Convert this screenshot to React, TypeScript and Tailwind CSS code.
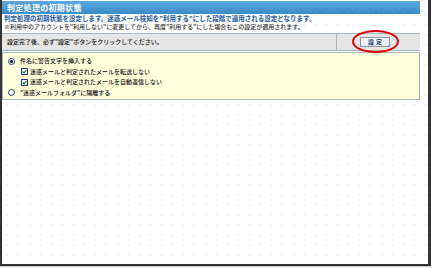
import React from "react";

function Radio({ checked }: { checked?: boolean }) {
  return (
    <span className="w-[7px] h-[7px] rounded-full border border-[#1f3f73] bg-white flex items-center justify-center shrink-0">
      {checked && <span className="w-[3px] h-[3px] rounded-full bg-[#111]" />}
    </span>
  );
}

function Check() {
  return (
    <span className="w-[7px] h-[7px] border border-[#1f3f73] bg-white flex items-center justify-center shrink-0">
      <svg viewBox="0 0 6 6" className="w-[5px] h-[5px]">
        <path d="M0.8 3 L2.4 4.6 L5.2 1.2" fill="none" stroke="#1b5e20" strokeWidth="1.3" />
      </svg>
    </span>
  );
}

export default function App() {
  const options = [
    { type: "radio", checked: true, label: "件名に警告文字を挿入する", indent: false },
    { type: "check", label: "迷惑メールと判定されたメールを転送しない", indent: true },
    { type: "check", label: "迷惑メールと判定されたメールを自動返信しない", indent: true },
    { type: "radio", checked: false, label: "\"迷惑メールフォルダ\"に隔離する", indent: false },
  ];

  return (
    <div className="w-[436px] h-[268px] bg-white font-['Noto_Sans_CJK_JP','Noto_Sans',sans-serif] text-[#111]">
      <div className="w-[431px] h-[267px] border-b border-[#c8c8c8]">
        <div className="w-[431px] h-[266px] border-l-2 border-r-[3px] border-b-2 border-[#333] bg-[radial-gradient(#f2f3f5_1px,transparent_1.5px)] bg-[length:11px_10px] pt-[1px]">
          <div className="w-[418px]">
            {/* title */}
            <div className="h-[13px] bg-gradient-to-b from-[#5aa8dc] to-[#3b8cc6] flex items-center pl-[5px]">
              <span className="text-white text-[8px] font-bold leading-none tracking-[0.3px]">判定処理の初期状態</span>
            </div>

            <div className="pl-[2px] pb-[2px]">
              <p className="text-[6.5px] leading-[9px] font-bold text-[#1d5a9a] whitespace-nowrap">
                判定処理の初期状態を設定します。迷惑メール検知を"利用する"にした段階で適用される設定となります。
              </p>
              <p className="text-[6px] leading-[8px] font-medium text-[#333] whitespace-nowrap">
                ※利用中のアカウントを"利用しない"に変更してから、再度"利用する"にした場合もこの設定が適用されます。
              </p>
            </div>

            {/* action row */}
            <div className="h-[18px] flex border-y border-[#a9b6c4] bg-[#e6e6e6]">
              <div className="w-[335px] flex items-center pl-[5px] border-r border-[#a9b6c4]">
                <span className="text-[6px] leading-none font-medium whitespace-nowrap">
                  設定完了後、必ず"設定"ボタンをクリックしてください。
                </span>
              </div>
              <div className="flex-1 flex items-center pl-[23px] relative">
                <button className="w-[30px] h-[10px] border border-[#8d9aa8] bg-gradient-to-b from-white to-[#e4e8ec] text-[6px] font-bold text-[#1d3d6e] leading-none tracking-[2px] flex items-center justify-center pl-[2px]">
                  設定
                </button>
                <span className="absolute left-[15px] top-[-4px] w-[47px] h-[23px] rounded-[50%] border-2 border-[#e00000]" />
              </div>
            </div>

            {/* options */}
            <div className="mt-[1px] border border-[#a9b6c4] bg-[#ffffdc] pt-[3px] pb-[1px]">
              {options.map((o) => (
                <div
                  key={o.label}
                  className={`h-[10.5px] flex items-center ${o.indent ? "pl-[18px] gap-[2px]" : "pl-[5px] gap-[5px]"}`}
                >
                  {o.type === "radio" ? <Radio checked={o.checked} /> : <Check />}
                  <span className="text-[6px] leading-none font-medium whitespace-nowrap">{o.label}</span>
                </div>
              ))}
            </div>
          </div>
        </div>
      </div>
    </div>
  );
}
